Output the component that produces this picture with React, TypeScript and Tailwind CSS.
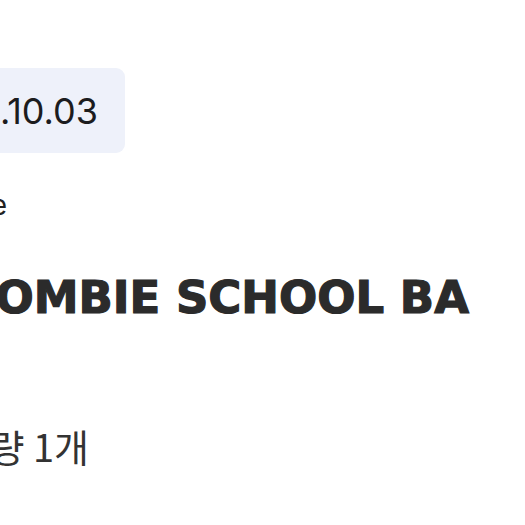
export default function App() {
  return (
    <div className="w-[525px] h-[525px] overflow-hidden bg-white">
      <div className="flex flex-col items-start pt-[68px]">
        <div className="w-[125px] flex justify-end">
          <div
            className="shrink-0 h-[85px] px-[27px] flex items-center rounded-[9px] bg-[#eef1fa] text-[36px] leading-none text-[#1c1c1e] whitespace-nowrap"
            style={{ fontFamily: "Inter, sans-serif" }}
          >
            2024.10.03
          </div>
        </div>
        <div className="mt-[38px] w-[7px] flex justify-end">
          <div
            className="shrink-0 text-[28px] leading-none text-[#222] whitespace-nowrap"
            style={{ fontFamily: "Inter, sans-serif" }}
          >
            Title
          </div>
        </div>
        <div className="mt-[56px] w-[469px] flex justify-end">
          <div
            className="shrink-0 text-[45px] leading-none font-bold text-[#2b2b2b] [-webkit-text-stroke:1.2px_#2b2b2b] whitespace-nowrap"
            style={{ fontFamily: "'DejaVu Sans', sans-serif" }}
          >
            ZOMBIE SCHOOL BA
          </div>
        </div>
        <div className="mt-[107px] w-[89px] flex justify-end">
          <div
            className="shrink-0 text-[38px] leading-none text-[#333] whitespace-nowrap"
            style={{ fontFamily: "'Noto Sans CJK KR', sans-serif" }}
          >
            수량 1개
          </div>
        </div>
      </div>
    </div>
  );
}
